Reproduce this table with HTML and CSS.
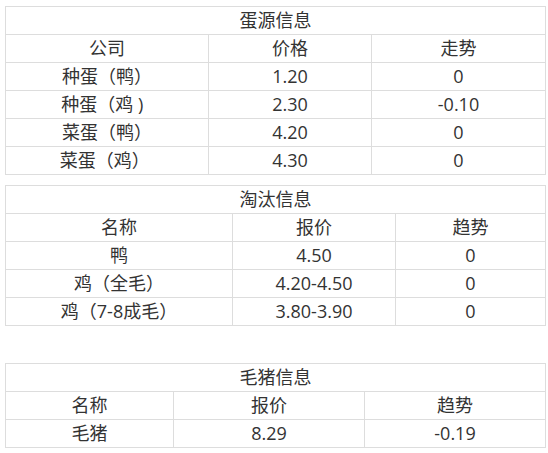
FILE: index.html
```
<!DOCTYPE html>
<html lang="zh-CN">
<head>
<meta charset="utf-8">
<title>价格信息</title>
<link rel="stylesheet" href="styles.css">
</head>
<body>
<table class="grid t-egg">
  <colgroup><col class="c1"><col class="c2"><col class="c3"></colgroup>
  <tr><td colspan="3">蛋源信息</td></tr>
  <tr><td>公司</td><td>价格</td><td>走势</td></tr>
  <tr><td>种蛋（鸭）</td><td>1.20</td><td>0</td></tr>
  <tr><td>种蛋（鸡 )&nbsp;&nbsp;</td><td>2.30</td><td>-0.10</td></tr>
  <tr><td>菜蛋（鸭）</td><td>4.20</td><td>0</td></tr>
  <tr><td>菜蛋（鸡）&nbsp;</td><td>4.30</td><td>0</td></tr>
</table>
<table class="grid t-cull">
  <colgroup><col class="c1"><col class="c2"><col class="c3"></colgroup>
  <tr><td colspan="3">淘汰信息</td></tr>
  <tr><td>名称</td><td>报价</td><td>趋势</td></tr>
  <tr><td>鸭</td><td>4.50</td><td>0</td></tr>
  <tr><td>鸡（全毛）</td><td>4.20-4.50</td><td>0</td></tr>
  <tr><td>鸡（7-8成毛）</td><td>3.80-3.90</td><td>0</td></tr>
</table>
<p class="blank">&nbsp;</p>
<table class="grid t-pig">
  <colgroup><col class="c1"><col class="c2"><col class="c3"></colgroup>
  <tr><td colspan="3">毛猪信息</td></tr>
  <tr><td>名称</td><td>报价</td><td>趋势</td></tr>
  <tr><td>毛猪</td><td>8.29</td><td>-0.19</td></tr>
</table>
</body>
</html>
```
FILE: styles.css
```
html, body {
  margin: 0;
  background: #fff;
}
body {
  padding: 6px 2px 0 5px;
  font-family: "Open Sans", "Noto Sans CJK SC", sans-serif;
  font-size: 18px;
  line-height: 27px;
  color: #333;
}
.grid {
  width: 541px;
  table-layout: fixed;
  border-collapse: collapse;
  margin: 0 0 10px 0;
}
.grid td {
  border: 1px solid #ddd;
  padding: 0;
  height: 27px;
  text-align: center;
  vertical-align: middle;
  white-space: nowrap;
}
.t-egg .c1 { width: 203px; }
.t-egg .c2 { width: 163px; }
.t-cull .c1 { width: 227px; }
.t-cull .c2 { width: 163px; }
.t-pig .c1 { width: 168px; }
.t-pig .c2 { width: 191px; }
.blank {
  margin: 0;
  height: 27px;
}
```
